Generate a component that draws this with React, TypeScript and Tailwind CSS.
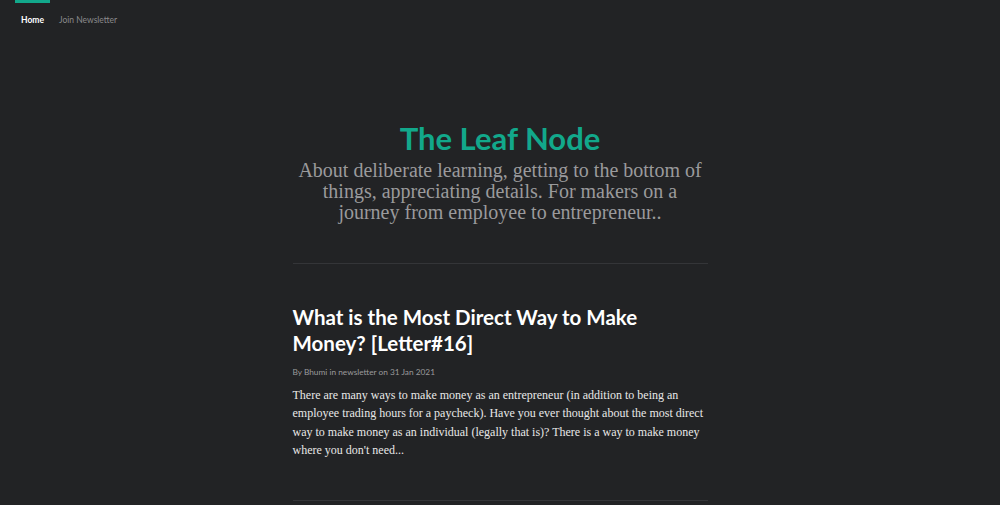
import React from "react";

export default function App() {
  const sans = { fontFamily: "Lato, 'Open Sans', sans-serif" };
  const serif = { fontFamily: "'Liberation Serif', 'DejaVu Serif', serif" };
  return (
    <div className="min-h-[505px] w-full bg-[#222325] text-white" style={sans}>
      <nav className="flex items-start px-[15px]">
        <a className="border-t-[3px] border-[#12a88b] px-[6px] pt-[11px] text-[8.5px] font-bold leading-[12px] text-white">Home</a>
        <a className="border-t-[3px] border-transparent px-[9px] pt-[11px] text-[8.5px] leading-[12px] text-[#8a8a8c]">Join Newsletter</a>
      </nav>
      <main className="mx-auto w-[415px]">
        <header className="pt-[94px] pb-[40px] text-center">
          <h1 className="text-[31px] font-bold leading-[36px] text-[#12a88b]">The Leaf Node</h1>
          <p className="mt-[3.5px] text-[20px] leading-[21px] text-[#9a9a9c]" style={serif}>
            About deliberate learning, getting to the bottom of things, appreciating details. For makers on a journey from employee to entrepreneur..
          </p>
        </header>
        <div className="h-px bg-[#343538]" />
        <article className="pt-[40px] pb-[40px]">
          <h2 className="text-[20.5px] font-bold leading-[26px] text-white">What is the Most Direct Way to Make Money? [Letter#16]</h2>
          <p className="mt-[10px] text-[8.3px] leading-[12px] text-[#9a9a9c]">By Bhumi in newsletter on 31 Jan 2021</p>
          <p className="mt-[8px] text-[12px] leading-[18.5px] text-[#e8e8e8]" style={serif}>
            There are many ways to make money as an entrepreneur (in addition to being an employee trading hours for a paycheck). Have you ever thought about the most direct way to make money as an individual (legally that is)? There is a way to make money where you don't need...
          </p>
        </article>
        <div className="h-px bg-[#343538]" />
      </main>
    </div>
  );
}
